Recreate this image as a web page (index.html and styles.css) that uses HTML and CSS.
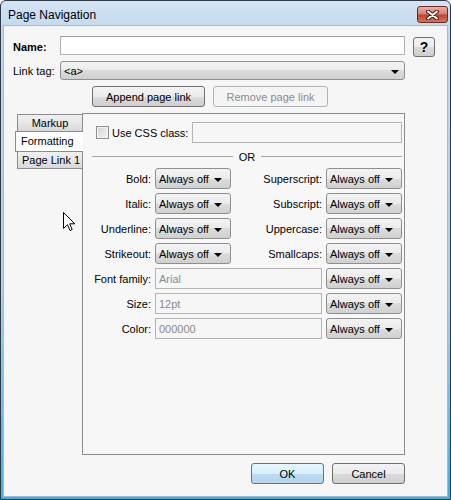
FILE: index.html
```html
<!DOCTYPE html>
<html lang="en">
<head>
    <meta charset="UTF-8">
    <title>Page Navigation</title>
    <link rel="stylesheet" href="styles.css">
</head>
<body>
    <div class="window">
        <div class="titlebar">
            <span class="title">Page Navigation</span>
            <span class="close">
                <svg width="13" height="10" viewBox="0 0 13 10">
                    <path d="M2 1.5 L11 8.5 M11 1.5 L2 8.5" stroke="#4a1a14" stroke-width="4" stroke-linecap="round"/>
                    <path d="M2 1.5 L11 8.5 M11 1.5 L2 8.5" stroke="#ffffff" stroke-width="2" stroke-linecap="round"/>
                </svg>
            </span>
        </div>

        <div class="client">
            <div class="top-grid">
                <label class="name-label">Name:</label>
                <input type="text" class="text-input">
                <button class="btn help">?</button>
                <label>Link tag:</label>
                <div class="dropdown link-select"><span>&lt;a&gt;</span><i class="arrow"></i></div>
            </div>

            <div class="link-actions">
                <button class="btn append">Append page link</button>
                <button class="btn remove" disabled>Remove page link</button>
            </div>

            <div class="tab-area">
                <div class="tabs">
                    <div class="tab markup">Markup</div>
                    <div class="tab active">Formatting</div>
                    <div class="tab pagelink">Page Link 1</div>
                </div>

                <div class="panel">
                    <div class="css-row">
                        <span class="checkbox"></span>
                        <span class="css-label">Use CSS class:</span>
                        <input type="text" class="text-input css-input" disabled>
                    </div>

                    <div class="or-sep"><span>OR</span></div>

                    <div class="format-grid">
                        <label>Bold:</label>
                        <div class="dropdown"><span>Always off</span><i class="arrow"></i></div>
                        <label>Superscript:</label>
                        <div class="dropdown"><span>Always off</span><i class="arrow"></i></div>

                        <label>Italic:</label>
                        <div class="dropdown"><span>Always off</span><i class="arrow"></i></div>
                        <label>Subscript:</label>
                        <div class="dropdown"><span>Always off</span><i class="arrow"></i></div>

                        <label>Underline:</label>
                        <div class="dropdown"><span>Always off</span><i class="arrow"></i></div>
                        <label>Uppercase:</label>
                        <div class="dropdown"><span>Always off</span><i class="arrow"></i></div>

                        <label>Strikeout:</label>
                        <div class="dropdown"><span>Always off</span><i class="arrow"></i></div>
                        <label>Smallcaps:</label>
                        <div class="dropdown"><span>Always off</span><i class="arrow"></i></div>

                        <label>Font family:</label>
                        <input type="text" class="text-input span-input" value="Arial" disabled>
                        <div class="dropdown"><span>Always off</span><i class="arrow"></i></div>

                        <label>Size:</label>
                        <input type="text" class="text-input span-input" value="12pt" disabled>
                        <div class="dropdown"><span>Always off</span><i class="arrow"></i></div>

                        <label>Color:</label>
                        <input type="text" class="text-input span-input" value="000000" disabled>
                        <div class="dropdown"><span>Always off</span><i class="arrow"></i></div>
                    </div>
                </div>
            </div>

            <div class="dialog-buttons">
                <button class="btn default">OK</button>
                <button class="btn">Cancel</button>
            </div>
        </div>

        <!-- mouse pointer over the dialog -->
        <svg class="cursor" width="13" height="20" viewBox="0 0 13 20">
            <path d="M0.5 0.5 V16.5 L4.5 12.7 L7 18.5 L9.2 17.5 L6.7 11.8 H11.8 Z" fill="#ffffff" stroke="#000000" stroke-width="1"/>
        </svg>
    </div>
</body>
</html>
```

FILE: styles.css
```css
* {
    margin: 0;
    padding: 0;
    box-sizing: border-box;
}

body {
    background-color: #ffffff;
    font-family: 'Liberation Sans', Arial, sans-serif;
    font-size: 11px;
    color: #000000;
}

.window {
    position: relative;
    width: 451px;
    height: 500px;
    display: flex;
    flex-direction: column;
    border: 1px solid #2f3a46;
    border-radius: 6px 6px 0 0;
    padding: 0 2px 2px;
    background: linear-gradient(#d3e4f5 0, #c1d8ee 30px, #a9cfea 60%, #3fb0e2 100%);
}

/* Title bar */
.titlebar {
    height: 24px;
    display: flex;
    justify-content: space-between;
    align-items: flex-start;
    padding: 4px 0 0 5px;
}

.title {
    font-size: 12px;
    line-height: 17px;
    margin-top: 2px;
    color: #000000;
}

.close {
    width: 31px;
    height: 17px;
    margin-top: 1px;
    display: flex;
    align-items: center;
    justify-content: center;
    border: 1px solid #6e2b22;
    border-radius: 3px;
    background: linear-gradient(#eab0a4 0%, #d8816f 45%, #c1432f 55%, #d6745c 100%);
}

/* Client area */
.client {
    flex: 1;
    border: 1px solid #a3b9cf;
    background-color: #f6f6f6;
    padding: 10px 0 0 9px;
}

.top-grid {
    display: grid;
    grid-template-columns: 47px 345px 30px;
    row-gap: 4px;
    align-items: center;
}

.name-label {
    font-weight: bold;
}

.text-input {
    height: 19px;
    border: 1px solid #b2b2b2;
    border-top-color: #a0a0a0;
    background-color: #ffffff;
    font-family: inherit;
    font-size: 11px;
    padding: 0 3px;
    outline: none;
}

.text-input:disabled {
    background-color: #f6f6f6;
    color: #8a8a8a;
    border-color: #b4b4b4;
}

.top-grid .text-input {
    align-self: start;
}

/* Buttons */
.btn {
    height: 21px;
    border: 1px solid #707070;
    border-radius: 3px;
    background: linear-gradient(#f3f3f3 0%, #ebebeb 50%, #dcdcdc 50%, #cfcfcf 100%);
    font-family: inherit;
    font-size: 11px;
    color: #000000;
}

.btn:disabled {
    border-color: #adb2b5;
    background: #f4f4f4;
    color: #8b8b8b;
}

.btn.help {
    width: 22px;
    height: 20px;
    justify-self: end;
    align-self: start;
    margin-top: 1px;
    font-size: 14px;
    font-weight: bold;
}

.btn.default {
    border-color: #3c7fb1;
    background: linear-gradient(#e6f6fc 0%, #d8f0fa 50%, #bcdcf2 50%, #b3d5ee 90%, #c7d9e6 100%);
}

/* Drop-down buttons */
.dropdown {
    height: 21px;
    display: flex;
    align-items: center;
    justify-content: space-between;
    border: 1px solid #8e8f8f;
    border-radius: 3px;
    background: linear-gradient(#f3f3f3 0%, #ebebeb 50%, #dcdcdc 50%, #d0d0d0 100%);
    padding: 0 8px 0 3px;
}

.arrow {
    width: 0;
    height: 0;
    border-left: 4px solid transparent;
    border-right: 4px solid transparent;
    border-top: 4px solid #000000;
    margin-top: 2px;
}

.link-select {
    height: 19px;
    padding: 0 5px 0 3px;
}

.link-actions {
    display: flex;
    gap: 8px;
    margin: 6px 0 0 79px;
}

.append {
    width: 113px;
}

.remove {
    width: 115px;
}

/* Tabs and panel */
.tab-area {
    display: flex;
    margin: 6px 0 0 2px;
}

.tabs {
    width: 67px;
    display: flex;
    flex-direction: column;
    padding-top: 1px;
}

.tab {
    height: 18px;
    margin-left: 2px;
    border: 1px solid #8c8a93;
    border-right: none;
    background: linear-gradient(#f0f0f0 0%, #e6e6e6 50%, #d8d8d8 100%);
    line-height: 16px;
    white-space: nowrap;
}

.tab.markup {
    text-align: center;
}

.tab.active {
    position: relative;
    z-index: 1;
    height: 21px;
    margin: -1px -1px 0 0;
    background: #ffffff;
    line-height: 19px;
    padding-left: 5px;
}

.tab.pagelink {
    margin-top: -1px;
    padding-left: 4px;
}

.panel {
    width: 323px;
    height: 342px;
    border: 1px solid #8c8a93;
    background-color: #f7f7f7;
    padding: 8px 2px 0 9px;
}

.css-row {
    height: 21px;
    display: flex;
    align-items: center;
}

.checkbox {
    width: 13px;
    height: 13px;
    margin-left: 4px;
    border: 1px solid #8f8f8f;
    background: linear-gradient(135deg, #d4d4d4, #f4f4f4);
    box-shadow: inset 0 0 0 1px #f4f4f4;
}

.css-label {
    margin-left: 3px;
    width: 80px;
}

.css-input {
    width: 210px;
    height: 21px;
}

.or-sep {
    height: 13px;
    margin-top: 7px;
    display: flex;
    align-items: center;
}

.or-sep::before,
.or-sep::after {
    content: '';
    flex: 1;
    height: 1px;
    background-color: #a6a6a6;
}

.or-sep span {
    padding: 0 6px;
}

.format-grid {
    display: grid;
    grid-template-columns: 59px 76px 87px 76px;
    grid-auto-rows: 21px;
    column-gap: 4px;
    row-gap: 4px;
    margin-top: 5px;
    align-items: center;
}

.format-grid label {
    text-align: right;
    white-space: nowrap;
}

.span-input {
    grid-column: 2 / 4;
    height: 21px;
}

.dialog-buttons {
    width: 392px;
    display: flex;
    justify-content: flex-end;
    gap: 8px;
    margin-top: 8px;
}

.dialog-buttons .btn {
    width: 73px;
}

.cursor {
    position: absolute;
    left: 62px;
    top: 211px;
}
```
